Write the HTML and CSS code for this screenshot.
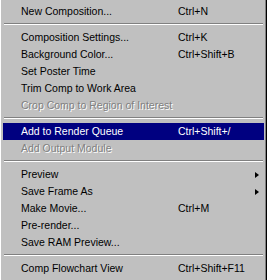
FILE: index.html
```html
<!DOCTYPE html>
<html lang="en">
<head>
    <meta charset="UTF-8">
    <title>Composition</title>

    <link rel="stylesheet" href="styles.css">
</head>
<body>

<div class="menu">
    <div class="item"><span class="label">New Composition...</span><span class="key">Ctrl+N</span></div>
    <div class="sep"></div>
    <div class="item"><span class="label">Composition Settings...</span><span class="key">Ctrl+K</span></div>
    <div class="item"><span class="label">Background Color...</span><span class="key">Ctrl+Shift+B</span></div>
    <div class="item"><span class="label">Set Poster Time</span></div>
    <div class="item"><span class="label">Trim Comp to Work Area</span></div>
    <div class="item disabled"><span class="label">Crop Comp to Region of Interest</span></div>
    <div class="sep"></div>
    <div class="item active"><span class="label">Add to Render Queue</span><span class="key">Ctrl+Shift+/</span></div>
    <div class="item disabled"><span class="label">Add Output Module</span></div>
    <div class="sep"></div>
    <div class="item sub"><span class="label">Preview</span><span class="arrow"></span></div>
    <div class="item sub"><span class="label">Save Frame As</span><span class="arrow"></span></div>
    <div class="item"><span class="label">Make Movie...</span><span class="key">Ctrl+M</span></div>
    <div class="item"><span class="label">Pre-render...</span></div>
    <div class="item"><span class="label">Save RAM Preview...</span></div>
    <div class="sep"></div>
    <div class="item"><span class="label">Comp Flowchart View</span><span class="key">Ctrl+Shift+F11</span></div>
</div>

</body>
</html>
```

FILE: styles.css
```css
* {
    margin: 0;
    padding: 0;
    box-sizing: border-box;
}

html,
body {
    background: #c0c0c0;
}

body {
    width: 267px;
    height: 280px;
    overflow: hidden;
    font-family: "Liberation Sans", Arial, sans-serif;
    font-size: 10.5px;
    color: #000;
}

.menu {
    width: 267px;
    height: 280px;
    padding: 3px 2px 0 2px;
    border-left: 1px solid #fff;
    border-right: 1px solid #000;
    box-shadow: inset -1px 0 0 #808080;
    background: #c0c0c0;
}

.item {
    display: grid;
    grid-template-columns: 157px 1fr auto;
    align-items: center;
    height: 17px;
    line-height: 17px;
    padding-left: 18px;
    padding-right: 5px;
    white-space: nowrap;
}

.item .label {
    grid-column: 1;
}

.item .key {
    grid-column: 2;
}

.item .arrow {
    grid-column: 3;
    width: 0;
    height: 0;
    border-top: 3.5px solid transparent;
    border-bottom: 3.5px solid transparent;
    border-left: 4px solid #000;
}

.item.active {
    background: #000080;
    color: #fff;
}

.item.disabled {
    color: #808080;
    text-shadow: 1px 1px 0 #fff;
}

.sep {
    height: 9px;
    padding: 3px 0 0 1px;
}

.sep::before {
    content: "";
    display: block;
    height: 1px;
    margin-right: 1px;
    background: #808080;
    border-bottom: 1px solid #fff;
    box-sizing: content-box;
}
```
